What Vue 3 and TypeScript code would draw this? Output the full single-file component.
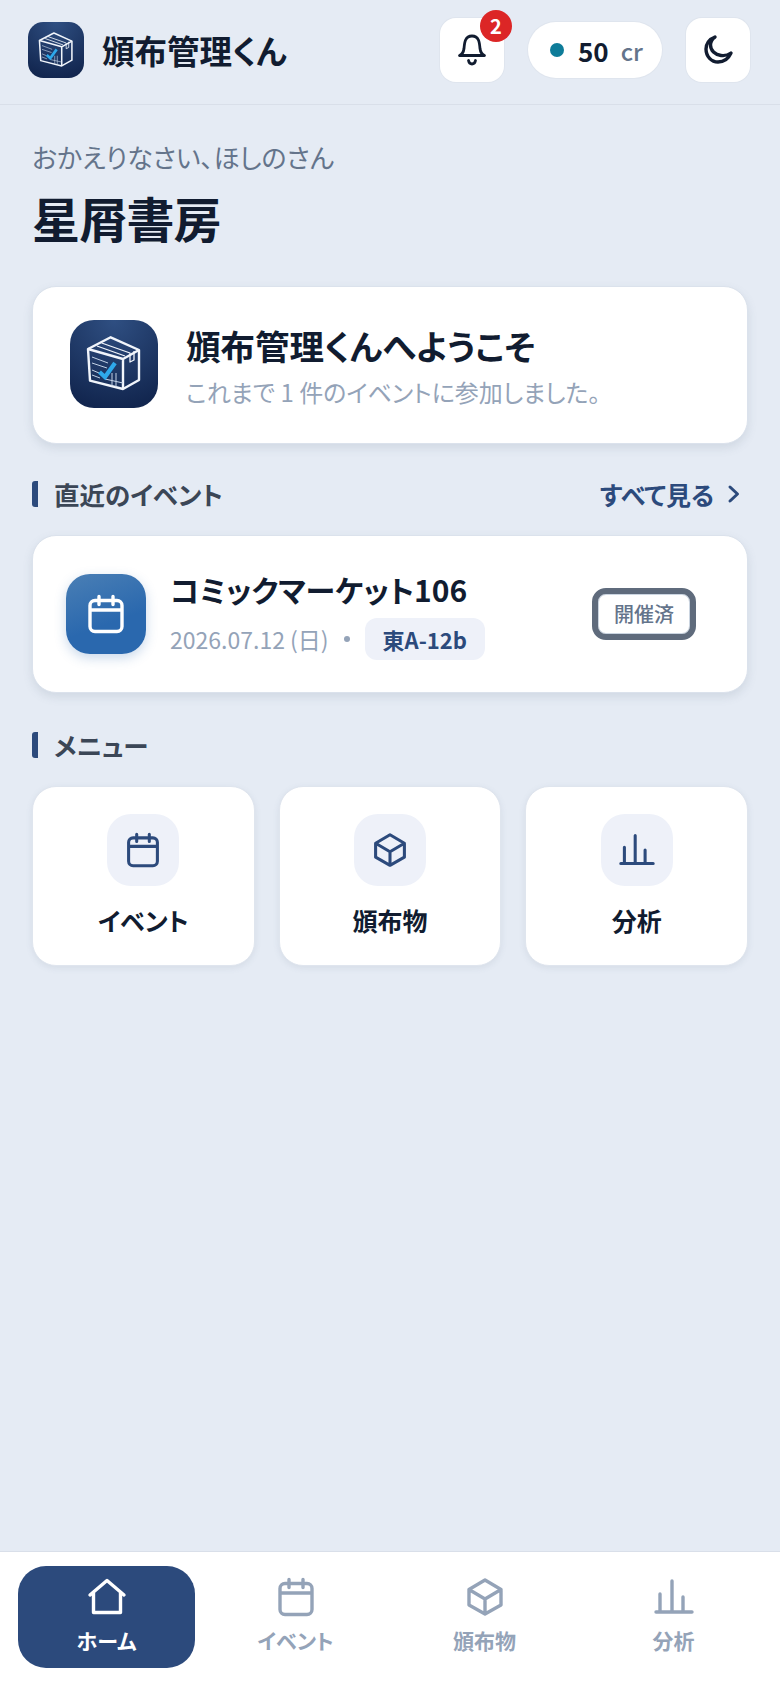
<script setup lang="ts">
const icons = {
  calendar: 'M9 6.500h22a5 5 0 0 1 5 5v21a5 5 0 0 1-5 5H9a5 5 0 0 1-5-5v-21a5 5 0 0 1 5-5zM4 16h32M13 2.500v8M27 2.500v8',
  box: 'M20 3l16 9.500V28L20 37 4 28V12.500zM4 12.500L20 22l16-9.500M20 22v15',
  chart: 'M2 35h36M6 35V17M18 35V4M29 35V20',
  home: 'M3 18L20 3.500 37 18M6.500 15.500V35.500h27V15.500',
}

interface NavItem {
  label: string
  icon: keyof typeof icons
  active?: boolean
}

const menuItems: NavItem[] = [
  { label: 'イベント', icon: 'calendar' },
  { label: '頒布物', icon: 'box' },
  { label: '分析', icon: 'chart' },
]

const navItems: NavItem[] = [
  { label: 'ホーム', icon: 'home', active: true },
  { label: 'イベント', icon: 'calendar' },
  { label: '頒布物', icon: 'box' },
  { label: '分析', icon: 'chart' },
]
</script>

<template>
  <div class="app">
    <header class="topbar">
      <div class="brand">
        <svg class="logo logo-small" viewBox="0 0 88 88">
          <use href="#app-logo" />
        </svg>
        <span class="brand-name">頒布管理くん</span>
      </div>
      <div class="top-actions">
        <button class="icon-btn">
          <svg class="bell" viewBox="0 0 30 32" fill="none" stroke="#111c30" stroke-width="2.800" stroke-linecap="round" stroke-linejoin="round">
            <path d="M2.500 21.500h25c-2.500-1-4-3-4.500-7-.5-6-1-12.500-8-12.500S7.500 8.500 7 14.500c-.5 4-2 6-4.500 7z" />
            <path d="M11.500 26.500c.5 2.500 2 3.500 3.500 3.500s3-1 3.500-3.500" />
          </svg>
          <span class="bell-count">2</span>
        </button>
        <div class="credit">
          <span class="credit-dot"></span>
          <span class="credit-value">50</span>
          <span class="credit-unit">cr</span>
        </div>
        <button class="icon-btn">
          <svg class="moon" viewBox="0 0 40 40" fill="none" stroke="#111c30" stroke-width="3.400" stroke-linecap="round" stroke-linejoin="round">
            <path d="M17 7C11 9 8 14 8 19c0 7.500 5.500 13 12 13 5.500 0 10.500-3.500 13-9-2 1.500-6 3-10 2.500-6-.8-10.500-5-10.500-10.500 0-3 1.500-6 4.500-8z" />
          </svg>
        </button>
      </div>
    </header>

    <main class="content">
      <p class="greeting">おかえりなさい、ほしのさん</p>
      <h1 class="circle-name">星屑書房</h1>

      <section class="card welcome">
        <svg class="logo logo-large" viewBox="0 0 88 88">
          <defs>
            <radialGradient id="logo-bg" cx="0.5" cy="0" r="1">
              <stop offset="0" stop-color="#2f4f82" />
              <stop offset="1" stop-color="#12264f" />
            </radialGradient>
            <symbol id="app-logo" viewBox="0 0 88 88">
              <rect width="88" height="88" rx="24" fill="url(#logo-bg)" />
              <g fill="none" stroke="#f1f5fb" stroke-width="2.400" stroke-linejoin="round">
                <path d="M40.700 17.300L69 30v30L53 69 20 60.700 18 29z" />
                <path d="M18 29l35 10 16-9M53 39v30" />
                <path d="M31.700 23L60 33v9l4-2v-9M27 26l28 10" stroke-width="1.300" />
              </g>
              <g fill="none" stroke="#c3d2e6" stroke-width="1">
                <path d="M22 37l16 6M22 43l15 5M22 50l7 3M22 55l8 3" />
                <path d="M42 53v13M46 53v14M35 59l18 4" />
              </g>
              <path d="M29.500 52l5.500 5 10-14" fill="none" stroke="#2ea8ea" stroke-width="4.200" />
            </symbol>
          </defs>
          <use href="#app-logo" />
        </svg>
        <div>
          <h2 class="welcome-title">頒布管理くんへようこそ</h2>
          <p class="welcome-sub">これまで 1 件のイベントに参加しました。</p>
        </div>
      </section>

      <div class="section-head">
        <h3 class="section-title">直近のイベント</h3>
        <a class="see-all">
          すべて見る
          <svg class="chevron" viewBox="0 0 16 20" fill="none" stroke="#2c4a7c" stroke-width="3" stroke-linecap="round" stroke-linejoin="round">
            <path d="M4 3l7.500 7L4 17" />
          </svg>
        </a>
      </div>

      <section class="card event">
        <div class="event-icon">
          <svg class="icon" viewBox="0 0 40 40">
            <path :d="icons.calendar" />
          </svg>
        </div>
        <div class="event-body">
          <div class="event-title">コミックマーケット106</div>
          <div class="event-meta">
            <span>2026.07.12 (日)</span>
            <span class="meta-dot"></span>
            <span class="booth">東A-12b</span>
          </div>
        </div>
        <span class="status">開催済</span>
      </section>

      <div class="section-head menu-head">
        <h3 class="section-title">メニュー</h3>
      </div>

      <div class="menu">
        <a v-for="item in menuItems" :key="item.label" class="menu-item">
          <span class="menu-tile">
            <svg class="icon" viewBox="0 0 40 40">
              <path :d="icons[item.icon]" />
            </svg>
          </span>
          <span class="menu-label">{{ item.label }}</span>
        </a>
      </div>
    </main>

    <nav class="tabbar">
      <a
        v-for="item in navItems"
        :key="item.label"
        class="tab"
        :class="{ active: item.active }"
      >
        <svg class="icon" viewBox="0 0 40 40">
          <path :d="icons[item.icon]" />
        </svg>
        <span>{{ item.label }}</span>
      </a>
    </nav>
  </div>
</template>

<style>
html,
body {
  margin: 0;
  background: #e5ebf4;
}
</style>

<style scoped>
.app {
  min-height: 1688px;
  display: flex;
  flex-direction: column;
  background: #e5ebf4;
  color: #111c30;
  font-family: "Noto Sans CJK JP", "Noto Sans", sans-serif;
  font-feature-settings: "palt";
}

.topbar {
  height: 105px;
  box-sizing: border-box;
  padding: 0 30px 4px 28px;
  display: flex;
  align-items: center;
  justify-content: space-between;
  border-bottom: 1px solid #d9dfe9;
}

.brand {
  display: flex;
  align-items: center;
  gap: 18px;
}

.logo {
  display: block;
  flex-shrink: 0;
}

.logo-small {
  width: 56px;
  height: 56px;
}

.logo-large {
  width: 88px;
  height: 88px;
  margin-bottom: 2px;
}

.brand-name {
  font-size: 32.500px;
  font-weight: 700;
  line-height: 1;
}

.top-actions {
  display: flex;
  align-items: center;
  gap: 24px;
}

.icon-btn {
  position: relative;
  width: 64px;
  height: 64px;
  padding: 0;
  border: 0;
  border-radius: 16px;
  background: #fff;
  box-shadow: 0 0 0 1px #dfe5ee;
  display: flex;
  align-items: center;
  justify-content: center;
}

.bell {
  width: 30px;
  height: 32px;
}

.moon {
  width: 40px;
  height: 40px;
}

.bell-count {
  position: absolute;
  top: -8px;
  right: -8px;
  width: 32px;
  height: 32px;
  border-radius: 50%;
  background: #dc2626;
  color: #fff;
  font: 700 20px/32px "Noto Sans CJK JP", sans-serif;
  text-align: center;
}

.credit {
  height: 56px;
  width: 134px;
  box-sizing: border-box;
  padding-left: 22px;
  border-radius: 28px;
  background: #fff;
  box-shadow: 0 0 0 1px #dfe5ee;
  display: flex;
  align-items: center;
}

.credit-dot {
  width: 14px;
  height: 14px;
  border-radius: 50%;
  background: #0e7c99;
  margin-right: 14px;
}

.credit-value {
  font-size: 26px;
  font-weight: 700;
  margin-right: 12px;
}

.credit-unit {
  font-size: 24px;
  font-weight: 500;
  color: #64748b;
}

.content {
  flex: 1;
  padding: 0 32px;
}

.greeting {
  margin: 34px 0 0;
  font-size: 26px;
  line-height: 36px;
  color: #64748b;
}

.circle-name {
  margin: 10px 0 0;
  font-size: 48px;
  line-height: 64px;
  font-weight: 700;
  letter-spacing: -0.800px;
}

.card {
  box-sizing: border-box;
  background: #fff;
  border: 1px solid #dbe2ec;
  border-radius: 24px;
  box-shadow: 0 4px 10px rgba(100, 116, 139, 0.16);
  display: flex;
  align-items: center;
}

.welcome {
  margin-top: 37px;
  height: 158px;
  padding-left: 37px;
  gap: 28px;
}

.welcome-title {
  margin: 0;
  font-size: 34.500px;
  line-height: 44px;
  font-weight: 700;
}

.welcome-sub {
  margin: 9px 0 0;
  font-size: 24px;
  line-height: 32px;
  color: #94a3b8;
}

.section-head {
  margin-top: 34px;
  height: 32px;
  display: flex;
  align-items: center;
  justify-content: space-between;
}

.section-title {
  margin: 0;
  padding-left: 16px;
  border-left: 6px solid #2c4a7c;
  border-radius: 3px;
  font-size: 25.500px;
  line-height: 26px;
  font-weight: 700;
  color: #3b4656;
}

.see-all {
  display: flex;
  align-items: center;
  gap: 12px;
  padding-right: 6px;
  font-size: 25px;
  font-weight: 700;
  color: #2c4a7c;
}

.chevron {
  width: 16px;
  height: 20px;
}

.event {
  margin-top: 25px;
  height: 158px;
  padding: 0 51px 0 33px;
  gap: 24px;
}

.icon {
  width: 40px;
  height: 40px;
  fill: none;
  stroke: currentColor;
  stroke-width: 3.400;
  stroke-linecap: round;
  stroke-linejoin: round;
  display: block;
}

.event-icon {
  width: 80px;
  height: 80px;
  border-radius: 24px;
  background: linear-gradient(160deg, #4a7fb5, #2a68ae 60%);
  box-shadow: 0 4px 12px rgba(42, 104, 174, 0.25);
  color: #fff;
  display: flex;
  align-items: center;
  justify-content: center;
}

.event-body {
  flex: 1;
}

.event-title {
  font-size: 30px;
  line-height: 40px;
  font-weight: 700;
}

.event-meta {
  margin-top: 9px;
  display: flex;
  align-items: center;
  font-size: 23px;
  color: #94a3b8;
}

.meta-dot {
  width: 6px;
  height: 6px;
  border-radius: 50%;
  background: #94a3b8;
  margin: 0 15px;
}

.booth {
  height: 42px;
  padding: 0 18px;
  border-radius: 12px;
  background: #eef1f9;
  color: #2c4a7c;
  font-weight: 700;
  font-size: 22px;
  line-height: 42px;
}

.status {
  width: 104px;
  height: 52px;
  box-sizing: border-box;
  border: 6px solid #5f6b7c;
  border-radius: 14px;
  background: #fff;
  box-shadow: inset 0 0 0 1px #cbd5e1;
  color: #64748b;
  font-size: 20px;
  font-weight: 500;
  line-height: 40px;
  text-align: center;
}

.menu-head {
  margin-top: 36px;
}

.menu {
  margin-top: 25px;
  display: grid;
  grid-template-columns: repeat(3, 1fr);
  gap: 24px;
}

.menu-item {
  height: 180px;
  box-sizing: border-box;
  background: #fff;
  border: 1px solid #dfe5ee;
  border-radius: 24px;
  box-shadow: 0 2px 6px rgba(100, 116, 139, 0.12);
  display: flex;
  flex-direction: column;
  align-items: center;
  padding-top: 27px;
}

.menu-tile {
  width: 72px;
  height: 72px;
  border-radius: 24px;
  background: #eef1f9;
  color: #2c4a7c;
  display: flex;
  align-items: center;
  justify-content: center;
}

.menu-tile .icon {
  width: 36px;
  height: 36px;
}

.menu-label {
  margin-top: 16px;
  font-size: 25px;
  line-height: 36px;
  font-weight: 600;
}

.tabbar {
  height: 137px;
  box-sizing: border-box;
  padding: 14px 18px 0;
  border-top: 1px solid #d9dfe9;
  background: #fff;
  display: grid;
  grid-template-columns: repeat(4, 1fr);
  gap: 12px;
  align-items: start;
}

.tab {
  height: 102px;
  border-radius: 28px;
  padding-top: 11px;
  box-sizing: border-box;
  display: flex;
  flex-direction: column;
  align-items: center;
  gap: 7px;
  color: #94a3b8;
  font-size: 21px;
  line-height: 32px;
  font-weight: 600;
}

.tab.active {
  background: #2c4a7c;
  color: #fff;
  font-weight: 700;
}
</style>
